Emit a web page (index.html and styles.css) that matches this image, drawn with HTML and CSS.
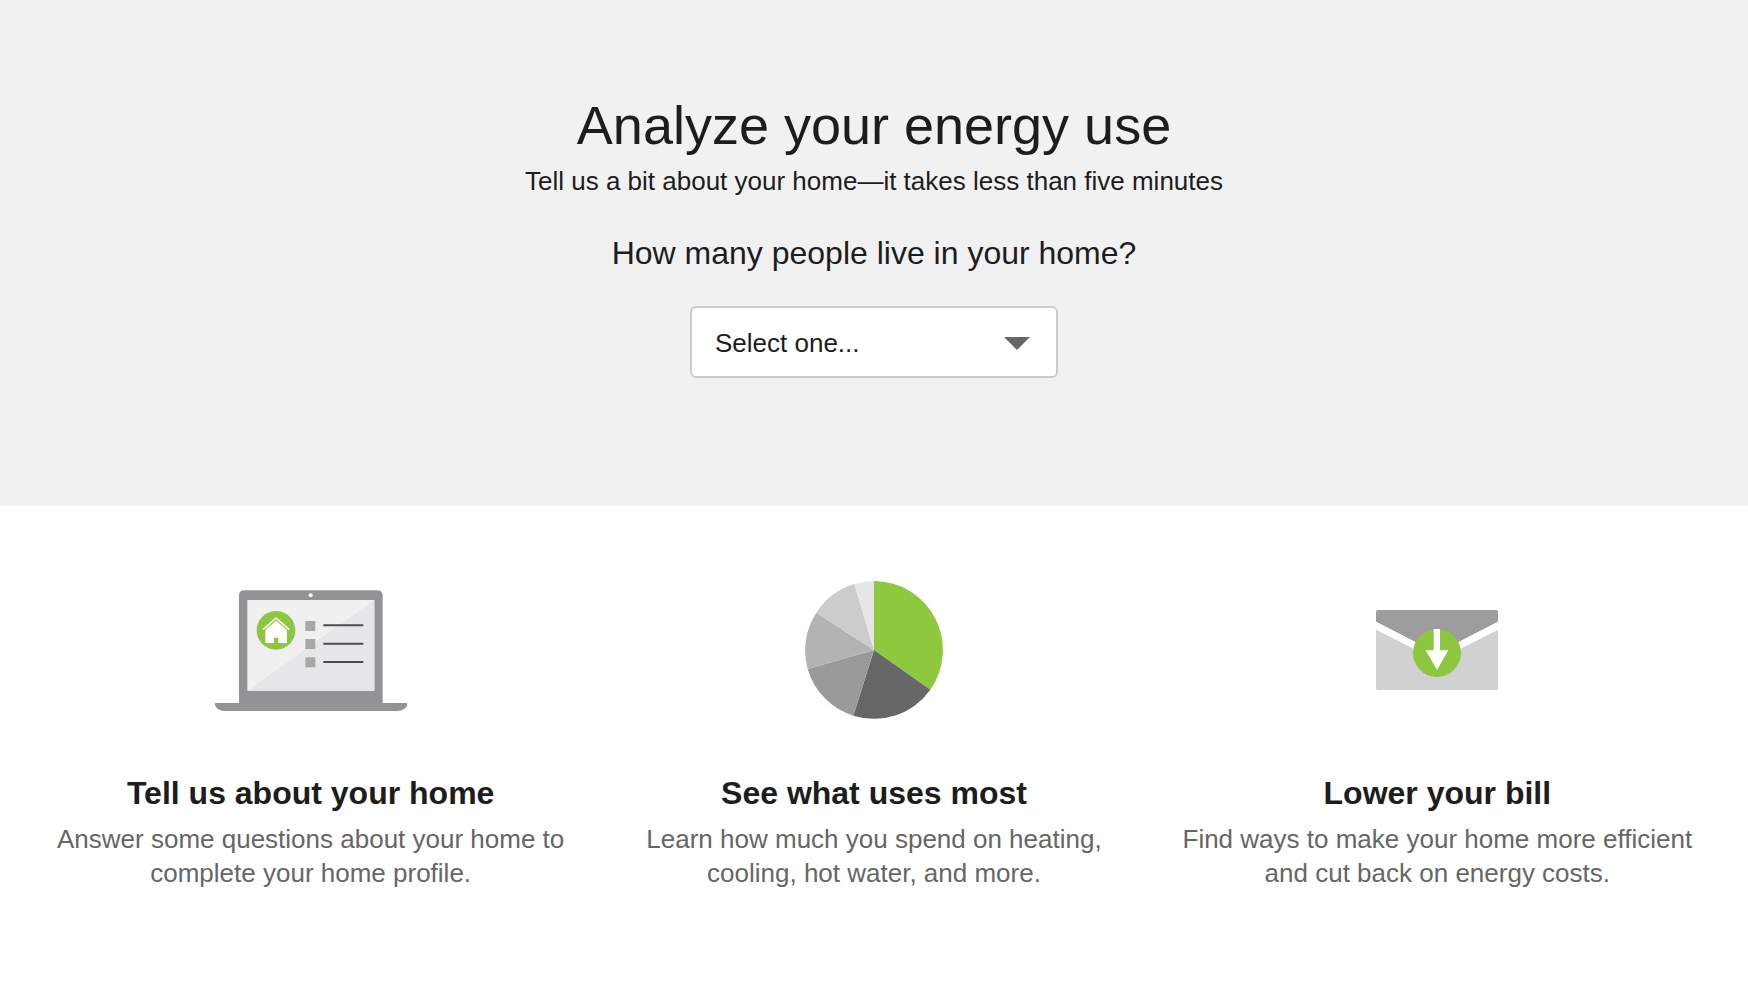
FILE: index.html
```html
<!DOCTYPE html>
<html lang="en">
<head>
<meta charset="utf-8">
<meta name="viewport" content="width=device-width, initial-scale=1">
<title>Analyze your energy use</title>
<link rel="stylesheet" href="styles.css">
</head>
<body>
<main>
  <section class="hero">
    <h1 class="hero-title">Analyze your energy use</h1>
    <p class="hero-subtitle">Tell us a bit about your home—it takes less than five minutes</p>
    <label class="hero-question" for="people">How many people live in your home?</label>
    <div class="select-box">
      <select class="select" id="people">
        <option>Select one...</option>
        <option>1</option>
        <option>2</option>
        <option>3</option>
        <option>4</option>
        <option>5 or more</option>
      </select>
      <svg class="select-arrow" viewBox="0 0 26 13" aria-hidden="true"><path d="M0 0H26L13 13Z"/></svg>
    </div>
  </section>
  <section class="features">
    <article class="feature">
      <div class="feature-art">
        <svg width="192" height="121" viewBox="44 57 576 363" aria-hidden="true">
          <path fill="#929395" d="M116 397V74Q116 58 133 58H530Q547 58 547 74V397Z"/>
          <path fill="#929395" d="M44 396H621V402Q614 420 586 420H78Q50 420 44 402Z"/>
          <path fill="#f0f0f0" d="M141 87H522V359H141Z"/>
          <path fill="#e6e7e9" d="M522 87V359H141Z"/>
          <circle fill="#fff" cx="331" cy="73" r="6"/>
          <circle fill="#8dc63f" cx="227" cy="178" r="58"/>
          <path fill="#fff" d="M195 216V177L227 149L260 177V216H234V200H221V216Z"/>
          <path fill="none" stroke="#fff" stroke-width="5" d="M188 176L227 141L267 176"/>
          <path fill="#a7a9a9" d="M315 150h30v30h-30zM315 204h30v30h-30zM315 259h30v30h-30z"/>
          <path stroke="#4d4d4f" stroke-width="6" d="M369 163H489M369 218H489M369 273H489"/>
        </svg>
      </div>
      <h2 class="feature-title">Tell us about your home</h2>
      <p class="feature-text">Answer some questions about your home to complete your home profile.</p>
    </article>
    <article class="feature">
      <div class="feature-art">
        <svg width="138" height="138" viewBox="45 30 414 414" aria-hidden="true">
          <path fill="#8dc83f" d="M252 237V30A207 207 0 0 1 421 356Z"/>
          <path fill="#666" d="M252 237L421 356A207 207 0 0 1 190 434Z"/>
          <path fill="#999a9a" d="M252 237L190 434A207 207 0 0 1 53 294Z"/>
          <path fill="#b3b3b3" d="M252 237L53 294A207 207 0 0 1 79 125Z"/>
          <path fill="#ccc" d="M252 237L79 125A207 207 0 0 1 193 39Z"/>
          <path fill="#e6e7e9" d="M252 237L193 39A207 207 0 0 1 252 30Z"/>
        </svg>
      </div>
      <h2 class="feature-title">See what uses most</h2>
      <p class="feature-text">Learn how much you spend on heating, cooling, hot water, and more.</p>
    </article>
    <article class="feature">
      <div class="feature-art">
        <svg width="122" height="80" viewBox="51 60 366 240" aria-hidden="true">
          <path fill="#9d9d9d" d="M51 65Q51 60 56 60H412Q417 60 417 65V95L234 190L51 95Z"/>
          <path fill="#d1d1d1" d="M51 119L234 204L417 119V295Q417 300 412 300H56Q51 300 51 295Z"/>
          <path fill="#fff" d="M51 95L234 190L417 95V119L234 212L51 119Z"/>
          <circle fill="#8dc63f" cx="234" cy="189" r="72"/>
          <path fill="#fff" d="M224 117H243V181H268L234 240L200 181H224Z"/>
        </svg>
      </div>
      <h2 class="feature-title">Lower your bill</h2>
      <p class="feature-text">Find ways to make your home more efficient and cut back on energy costs.</p>
    </article>
  </section>
</main>
</body>
</html>
```
FILE: styles.css
```css
* {
  box-sizing: border-box;
}

body {
  margin: 0;
  background: #fff;
  color: #1d1d1d;
  font-family: "Liberation Sans", Arial, sans-serif;
}

.hero {
  display: flex;
  flex-direction: column;
  align-items: center;
  padding: 93px 29px 128px;
  background: #f1f1f1;
  text-align: center;
}

.hero-title {
  margin: 0 0 7px;
  font-size: 54px;
  line-height: 64px;
  font-weight: 400;
}

.hero-subtitle {
  margin: 0 0 35px;
  font-size: 26px;
  line-height: 34px;
}

.hero-question {
  margin-bottom: 33px;
  font-size: 32px;
  line-height: 40px;
}

.select-box {
  position: relative;
  width: 368px;
  max-width: 100%;
}

.select {
  appearance: none;
  display: block;
  width: 100%;
  padding: 18px 60px 16px 23px;
  border: 2px solid #ccc;
  border-radius: 6px;
  background: #fff;
  color: inherit;
  font-family: inherit;
  font-size: 26px;
  line-height: 34px;
}

.select-arrow {
  position: absolute;
  top: 31px;
  right: 28px;
  width: 26px;
  height: 13px;
  fill: #666;
  pointer-events: none;
}

.features {
  display: grid;
  grid-template-columns: repeat(3, 1fr);
  padding: 74px 29px;
}

.feature {
  padding: 0 24px;
  text-align: center;
}

.feature-art {
  display: flex;
  align-items: center;
  justify-content: center;
  height: 140px;
  margin-bottom: 53px;
}

.feature-title {
  margin: 0 0 9px;
  font-size: 32px;
  line-height: 40px;
  font-weight: 700;
}

.feature-text {
  margin: 0;
  color: #666;
  font-size: 26px;
  line-height: 34px;
}
```
